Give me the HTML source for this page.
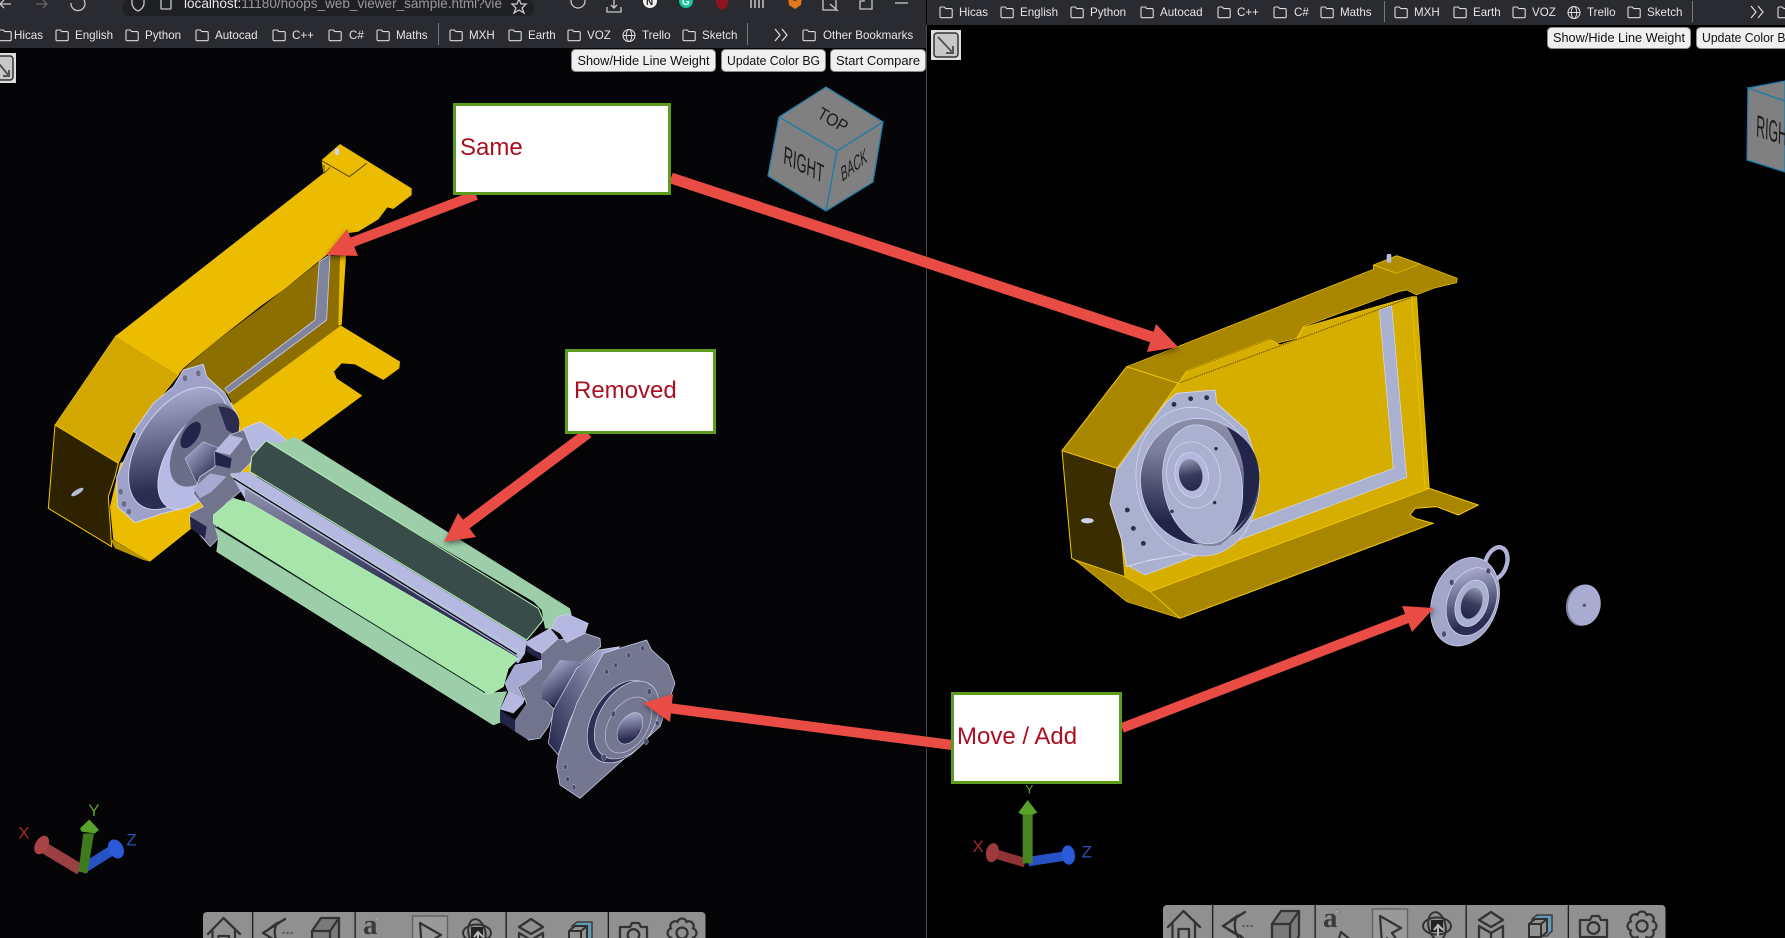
<!DOCTYPE html>
<html lang="en"><head><meta charset="utf-8"><title>Compare</title>
<style>
html,body{margin:0;padding:0;background:#000;width:1785px;height:938px;overflow:hidden}
svg{display:block;font-family:"Liberation Sans",sans-serif}
.bm{font-size:11.6px;fill:#e6e6e6}
.btn{fill:#efeff1;stroke:#8a8a8a;stroke-width:1}
.bt{font-size:12.6px;fill:#111}
.co{font-size:24px;fill:#aa1022}
.ar{filter:drop-shadow(1px 2px 3px rgba(0,0,0,.55))}
</style></head><body>
<svg width="1785" height="938" viewBox="0 0 1785 938" xmlns="http://www.w3.org/2000/svg">
<defs>
<linearGradient id="g" x1="0" y1="1" x2="1" y2="0"><stop offset="0" stop-color="#23244a"/><stop offset=".55" stop-color="#6d7090"/><stop offset="1" stop-color="#b9bce4"/></linearGradient>
<linearGradient id="g2" x1="0" y1="0" x2="1" y2="1"><stop offset="0" stop-color="#b9bce4"/><stop offset=".6" stop-color="#4b4d70"/><stop offset="1" stop-color="#23244a"/></linearGradient>
<linearGradient id="g3" x1="0" y1="0" x2="0" y2="1"><stop offset="0" stop-color="#8f93ad"/><stop offset=".5" stop-color="#3a3c5e"/><stop offset="1" stop-color="#23244a"/></linearGradient>
<linearGradient id="g4" x1=".55" y1="0" x2=".3" y2=".8"><stop offset="0" stop-color="#8a8ea8"/><stop offset=".35" stop-color="#7b7f9c"/><stop offset="1" stop-color="#23244a"/></linearGradient>
<linearGradient id="sh" x1="0" y1="0" x2=".45" y2=".9"><stop offset="0" stop-color="#c0c3ea"/><stop offset=".55" stop-color="#6e7192"/><stop offset="1" stop-color="#2c2d52"/></linearGradient>
<g id="f"><path d="M1 10.500V2.200Q1 1 2.200 1H5.300L6.800 2.600H12Q13.200 2.600 13.200 3.800V10.500Q13.200 11.700 12 11.700H2.200Q1 11.700 1 10.500Z" fill="none" stroke="#dcdcdc" stroke-width="1.100"/></g>
<g id="gl"><circle cx="7" cy="6.500" r="6" fill="none" stroke="#dcdcdc" stroke-width="1.100"/><ellipse cx="7" cy="6.500" rx="2.700" ry="6" fill="none" stroke="#dcdcdc" stroke-width="1"/><path d="M1 6.500H13" stroke="#dcdcdc" stroke-width="1"/></g>
<g id="tb">
<rect x="0" y="0" width="502.500" height="60" rx="4" fill="#909090"/>
<g fill="#1c1c1c"><rect x="49" y="0" width="1.300" height="60"/><rect x="151.500" y="0" width="1.300" height="60"/><rect x="302.500" y="0" width="1.300" height="60"/><rect x="404.700" y="0" width="1.300" height="60"/></g>
<path d="M174 4.500l3.500 3.500h-7zM223 2.500l4 4h-8z" fill="#aaa" stroke="#777" stroke-width=".6"/>
<rect x="209.500" y="4" width="35" height="50" fill="#999" stroke="#626262" stroke-width="1.400"/>
<g fill="none" stroke="#333" stroke-width="2.300" stroke-linejoin="round" stroke-linecap="round">
<path d="M5 22L20.500 6L37 22M9.500 18V42M32 18V42M15.500 42V24H26V42"/>
<path d="M82 7L60 21L80 33M66 17Q72 12 77 10M66 25Q72 29 78 31M74 11Q69 21 75 32"/>
<path d="M80 21h1M84 21h1M88 21h1" stroke-width="1.300"/>
<path d="M109 19L118 6H136V31L127 46H109Z" fill="#7a7a7a"/><path d="M109 19H127L136 6M127 19V46" fill="none"/>
<path d="M178 27L172 47M178 27L194 40L186 46" stroke-width="2.200"/>
<path d="M217 11L238 23L229 28L236 38L231 42L224 33L219 39Z" stroke-width="2.200"/>
<ellipse cx="274" cy="21" rx="14" ry="8.500" stroke-width="2"/><ellipse cx="274" cy="21" rx="8.500" ry="14" stroke-width="2" transform="rotate(-12 274 21)"/>
<path d="M328 7L340 15L328 22L316 15Z"/><path d="M316 21L328 28L340 21M316 21V37L326 43M340 21V37L330 43M328 28V46"/>
<path d="M427 15l2-4h7l2 4h6V32H417V15Z"/><circle cx="430.500" cy="23" r="5.800"/>
</g>
<path d="M369 14L374 10H389V26L384 31H369Z" fill="#5c9db5" stroke="#3c3c3c" stroke-width="1.500"/>
<path d="M366 19L372 14H384V27L378 32H366Z" fill="#919191" stroke="#303030" stroke-width="2"/><path d="M366 19H378V32M378 19L384 14" fill="none" stroke="#303030" stroke-width="2"/>
<rect x="268" y="15" width="12" height="12" fill="#222"/>
<path d="M275 31V21M271 25L275 20L280 25" fill="none" stroke="#bbb" stroke-width="2"/>
<text x="160" y="22" font-family="Liberation Serif,serif" font-weight="bold" font-size="29" fill="#3a3a3a">a</text>
<path transform="translate(479 21)" fill="none" stroke="#333" stroke-width="2.300" d="M11.090 -4.590A4.800 4.800 0 0 1 11.090 4.590A4.800 4.800 0 0 1 4.590 11.090A4.800 4.800 0 0 1 -4.590 11.090A4.800 4.800 0 0 1 -11.090 4.590A4.800 4.800 0 0 1 -11.090 -4.590A4.800 4.800 0 0 1 -4.590 -11.090A4.800 4.800 0 0 1 4.590 -11.090A4.800 4.800 0 0 1 11.090 -4.590ZM5.500 0A5.500 5.500 0 1 1 -5.500 0A5.500 5.500 0 1 1 5.500 0Z"/>
</g>
</defs>

<!-- backgrounds -->
<rect x="0" y="0" width="926" height="938" fill="#050406"/>
<rect x="927" y="0" width="858" height="938" fill="#000"/>
<rect x="926" y="25" width="1" height="913" fill="#4a4a4e"/>

<!-- LEFT MODEL yellow -->
<g transform="translate(30 130) scale(.33333)" stroke-linejoin="round">
<polygon points="600,820 930,585 1110,695 1108,715 1060,750 975,703 935,700 912,725 920,745 997,797 810,935 360,1295 250,1230 240,1130 270,1000" fill="#ecbc00"/>
<polygon points="460,718 550,640 690,535 760,480 890,378 948,375 935,585 610,825 590,790" fill="#8c6f00"/>
<polygon points="935,585 948,375 930,380 925,585" fill="#ecbc00"/>
<polygon points="868,395 900,375 890,570 595,790 585,775 855,570" fill="#7f849c" stroke="#c8cce8" stroke-width="2.500"/>
<polygon points="258,617 880,130 875,90 930,42 1145,175 1145,195 1090,237 1072,232 1045,268 985,305 950,310 890,375 760,480 690,530 550,640 460,715 445,735" fill="#ecbc00"/>
<polygon points="258,617 445,735 310,905 265,1000 75,885" fill="#d2a800" stroke="#f4c800" stroke-width="2"/>
<polygon points="75,885 265,1000 255,1040 235,1100 245,1250 55,1135" fill="#2e2200" stroke="#f4c800" stroke-width="3"/>
<polygon points="240,1225 360,1295 340,1290 255,1255" fill="#b89300"/>
<ellipse cx="142" cy="1086" rx="21" ry="7" fill="#b9bcd8" transform="rotate(-32 142 1086)"/>
<path d="M875 92L958 140L1010 100M882 105V130L900 112" fill="none" stroke="#5a4700" stroke-width="3"/>
<rect x="915" y="55" width="12" height="20" rx="4" fill="#cfd2ee"/>
<!-- motor -->
<polygon points="460,720 520,703 530,740 585,790 625,860 628,920 480,1130 400,1150 315,1178 262,1130 260,1040 320,910 310,905 370,820 430,770" fill="#9fa2c8" stroke="#d8dbf5" stroke-width="2.500"/>
<ellipse cx="445" cy="955" rx="118" ry="205" transform="rotate(33 445 955)" fill="url(#sh)" stroke="#d8dbf5" stroke-width="2.500"/>
<ellipse cx="505" cy="985" rx="92" ry="172" transform="rotate(33 505 985)" fill="#b7bae2" stroke="#d8dbf5" stroke-width="2.500"/>
<ellipse cx="520" cy="945" rx="78" ry="140" transform="rotate(33 520 945)" fill="#6b6e88"/>
<path d="M565 830Q625 830 628 880L625 920L590 900Z" fill="#2b2c50"/>
<ellipse cx="482" cy="915" rx="22" ry="45" transform="rotate(33 482 915)" fill="#23244a"/>
<polygon points="465,985 520,935 590,965 550,1040 500,1060" fill="url(#g2)" stroke="#d8dbf5" stroke-width="1.500"/>
<g fill="#6b6e88" stroke="#d8dbf5"><ellipse cx="505" cy="730" rx="8" ry="10"/><ellipse cx="465" cy="745" rx="8" ry="10"/><ellipse cx="272" cy="1085" rx="8" ry="10"/><ellipse cx="282" cy="1122" rx="8" ry="10"/><ellipse cx="297" cy="1145" rx="8" ry="10"/></g>
<!-- left gear -->
<polygon points="640,900 770,930 690,945 660,1000 620,1040 660,1060 600,1110 550,1160 570,1220 540,1250 480,1180 480,1150 520,1130 490,1090 510,1040 555,1010 555,965 600,915" fill="#71748c" stroke="#d8dbf5" stroke-width="2"/>
<polygon points="640,895 690,875 740,905 770,930 720,960 665,960" fill="#b5b8e0" stroke="#d8dbf5" stroke-width="2"/>
<polygon points="555,965 600,915 640,925 600,975" fill="#b5b8e0"/>
<polygon points="555,965 605,985 600,1015 556,1005" fill="#23244a"/>
<polygon points="490,1075 540,1030 590,1040 545,1085 510,1105" fill="#a6a9d2"/>
<polygon points="480,1160 530,1190 525,1225 482,1195" fill="#23244a"/>
</g>

<!-- LEFT green cylinder & right gear -->
<g transform="translate(180 420) scale(.33333)" stroke-linejoin="round">
<polygon points="300,70 345,50 1170,565 1175,585 1125,628 1095,625 1085,570 1060,545 245,65" fill="#9bcea9"/>
<polygon points="115,355 110,395 940,915 965,905 960,865 980,815 920,820 105,320" fill="#9bcea9" stroke="#b8f5b8" stroke-width="1.500"/>
<polygon points="150,160 205,155 1040,662 1035,700 1015,730 200,245" fill="#b5b8e0"/>
<polygon points="195,205 1015,712 1005,732 195,245" fill="url(#g3)"/>
<path d="M160 175L1010 703" stroke="#0c0c12" stroke-width="4"/>
<path d="M150 165L1030 705" stroke="#b8f5b8" stroke-width="1.500"/>
<polygon points="258,62 1075,565 1090,600 1040,660 210,155 215,110" fill="#394c49" stroke="#b8f5b8" stroke-width="3"/>
<polygon points="160,235 210,250 1015,715 985,745 970,800 935,820 915,820 100,310 100,285" fill="#a8e5aa" stroke="#b8f5b8" stroke-width="2"/>
<path d="M105 320L915 818" stroke="#10251a" stroke-width="3"/>
<!-- gear -->
<polygon points="1090,640 1140,660 1215,640 1260,655 1262,680 1190,740 1130,770 1085,830 1125,870 1105,920 1080,955 1045,960 1015,930 1035,890 1040,850 1015,790 1085,740 1085,700 1130,660" fill="#71748c" stroke="#d8dbf5" stroke-width="2"/>
<polygon points="1115,625 1130,590 1165,583 1225,610 1215,640 1160,668 1140,640" fill="#b5b8e0" stroke="#d8dbf5" stroke-width="1.500"/>
<polygon points="1040,665 1110,625 1135,655 1085,700 1040,680" fill="#b5b8e0" stroke="#d8dbf5" stroke-width="1.500"/>
<polygon points="1040,675 1085,705 1085,722 1040,695" fill="#23244a"/>
<polygon points="975,790 1005,735 1085,720 1085,745 1035,790 1015,800 1030,835 985,815" fill="#a6a9d2" stroke="#d8dbf5" stroke-width="1.500"/>
<polygon points="985,815 1035,835 1030,850 1000,880 960,868" fill="#b5b8e0"/>
<polygon points="960,870 1005,900 1005,935 960,905" fill="#23244a"/>
<polygon points="1005,900 1040,850 1045,960 1005,935" fill="#71748c"/>
<polygon points="1085,795 1140,720 1200,725 1180,800 1125,860 1085,835" fill="url(#sh)"/>
<polygon points="1105,970 1120,870 1190,745 1255,690 1320,680 1260,720 1170,900 1135,1005" fill="url(#g)" stroke="#d8dbf5" stroke-width="2"/>
<polygon points="1135,1005 1190,850 1270,700 1400,660 1415,690 1465,735 1485,790 1440,920 1200,1135 1140,1095 1130,1040" fill="#74778f" stroke="#d8dbf5" stroke-width="2"/>
<ellipse cx="1325" cy="905" rx="88" ry="135" transform="rotate(32 1325 905)" fill="#2f3054" stroke="#d8dbf5" stroke-width="2"/>
<ellipse cx="1340" cy="900" rx="82" ry="128" transform="rotate(32 1340 900)" fill="#74778f" stroke="#d8dbf5" stroke-width="2"/>
<ellipse cx="1345" cy="915" rx="58" ry="92" transform="rotate(32 1345 915)" fill="#74778f" stroke="#d8dbf5" stroke-width="1.500"/>
<ellipse cx="1350" cy="925" rx="32" ry="52" transform="rotate(32 1350 925)" fill="url(#sh)" stroke="#d8dbf5" stroke-width="1.500"/>
<circle cx="1375" cy="935" r="4" fill="#3a3c5e"/>
<g fill="#4a4d68" stroke="#d8dbf5"><ellipse cx="1388" cy="685" rx="6" ry="8"/><ellipse cx="1346" cy="706" rx="6" ry="8"/><ellipse cx="1307" cy="736" rx="6" ry="8"/><ellipse cx="1280" cy="755" rx="6" ry="8"/><ellipse cx="1156" cy="1041" rx="6" ry="8"/><ellipse cx="1163" cy="1078" rx="6" ry="8"/><ellipse cx="1182" cy="1102" rx="6" ry="8"/><ellipse cx="1408" cy="815" rx="7" ry="9"/><ellipse cx="1300" cy="882" rx="7" ry="9"/><ellipse cx="1272" cy="1012" rx="7" ry="9"/><ellipse cx="1398" cy="965" rx="7" ry="9"/><ellipse cx="1432" cy="910" rx="6" ry="8"/></g>
</g>

<!-- RIGHT MODEL -->
<g transform="translate(1050 240) scale(.33333)" stroke-linejoin="round">
<polygon points="230,380 970,88 970,75 1040,47 1110,72 1222,115 1220,128 1150,145 1100,165 1070,150 1045,155 760,260 740,295 680,310 660,297 410,392 385,430" fill="#a88600" stroke="#f4c800" stroke-width="2"/>
<polygon points="385,430 410,395 660,300 690,315 740,298 760,262 1085,170 1138,745 300,1060 225,1010 220,960 200,700" fill="#d6ae00" stroke="#f4c800" stroke-width="2"/>
<polygon points="1085,170 1100,170 1138,745 1125,745" fill="#d6ae00" stroke="#f4c800" stroke-width="2"/>
<polygon points="300,1055 1138,745 1285,795 1225,825 1160,800 1095,805 1080,825 1095,835 1150,850 390,1135" fill="#a88600" stroke="#f4c800" stroke-width="3"/>
<polygon points="230,380 385,430 200,685 36,632" fill="#a88600" stroke="#f4c800" stroke-width="3"/>
<polygon points="36,632 200,685 205,745 180,790 215,900 225,1010 75,960 65,955" fill="#3a2d00" stroke="#f4c800" stroke-width="3"/>
<polygon points="75,960 225,1010 300,1055 390,1135 230,1085" fill="#aa8800" stroke="#f4c800" stroke-width="2"/>
<polygon points="988,210 1025,198 1070,712 285,1005 230,975 520,920 590,848 1030,685" fill="#aab0d0" stroke="#d8dbf5" stroke-width="2"/>
<polygon points="970,75 1040,47 1110,72 1040,100" fill="#b08d00" stroke="#f4c800" stroke-width="2"/>
<rect x="1010" y="42" width="14" height="26" rx="4" fill="#b9bddc"/>
<ellipse cx="112" cy="842" rx="19" ry="8" fill="#cfd2ea"/>
<path d="M390 428L1085 172" stroke="#5c4a00" stroke-width="3" stroke-dasharray="4 3" fill="none"/>
<!-- motor -->
<polygon points="200,690 345,490 380,460 495,450 500,490 590,570 628,690 600,830 510,925 300,960 230,980 215,900 180,790" fill="#aab0d0" stroke="#d8dbf5" stroke-width="2.500"/>
<ellipse cx="440" cy="725" rx="180" ry="225" transform="rotate(-12 440 725)" fill="#aab0d0" stroke="#d8dbf5" stroke-width="2"/>
<ellipse cx="450" cy="725" rx="178" ry="190" transform="rotate(-12 450 725)" fill="url(#g4)" stroke="#d8dbf5" stroke-width="2"/>
<path d="M530 560Q630 610 628 720Q620 830 520 890Q610 760 570 640Q550 590 530 560Z" fill="#23244a"/>
<path d="M420 900Q520 925 590 830Q560 880 510 915Q460 925 420 900Z" fill="#7f849c"/>
<ellipse cx="458" cy="733" rx="118" ry="180" transform="rotate(-10 458 733)" fill="#aab0d0" stroke="#d8dbf5" stroke-width="2"/>
<ellipse cx="430" cy="705" rx="80" ry="100" transform="rotate(-10 430 705)" fill="#aab0d0" stroke="#d8dbf5" stroke-width="2"/>
<ellipse cx="425" cy="705" rx="50" ry="68" transform="rotate(-10 425 705)" fill="#b5b8dc" stroke="#d8dbf5" stroke-width="2"/>
<ellipse cx="422" cy="705" rx="35" ry="48" transform="rotate(-10 422 705)" fill="url(#g3)"/>
<g fill="#2d2e48" stroke="#d8dbf5"><circle cx="372" cy="493" r="8"/><circle cx="422" cy="476" r="8"/><circle cx="470" cy="473" r="8"/><circle cx="232" cy="810" r="8"/><circle cx="250" cy="865" r="8"/><circle cx="280" cy="910" r="8"/><circle cx="498" cy="626" r="6"/><circle cx="494" cy="788" r="6"/><circle cx="366" cy="814" r="6"/></g>
</g>

<!-- right small parts -->
<g transform="translate(1410 530) scale(.33333)">
<ellipse cx="258" cy="100" rx="32" ry="50" transform="rotate(20 258 100)" fill="none" stroke="#aeb2d4" stroke-width="13"/>
<ellipse cx="165" cy="215" rx="98" ry="137" transform="rotate(20 165 215)" fill="#a2a6c8" stroke="#d8dbf5" stroke-width="2"/>
<ellipse cx="185" cy="215" rx="72" ry="105" transform="rotate(20 185 215)" fill="url(#sh)" stroke="#d8dbf5" stroke-width="2"/>
<ellipse cx="185" cy="220" rx="47" ry="72" transform="rotate(20 185 220)" fill="#aab0d0" stroke="#d8dbf5" stroke-width="2"/>
<ellipse cx="185" cy="220" rx="30" ry="48" transform="rotate(20 185 220)" fill="url(#g3)"/>
<g fill="#4a4d68" stroke="#d8dbf5"><ellipse cx="125" cy="157" rx="7" ry="9"/><ellipse cx="235" cy="123" rx="7" ry="9"/><ellipse cx="102" cy="312" rx="7" ry="9"/></g>
<ellipse cx="516" cy="226" rx="48" ry="62" transform="rotate(10 516 226)" fill="#7b7f9c"/>
<ellipse cx="523" cy="225" rx="49" ry="62" transform="rotate(10 523 225)" fill="#a8acd0"/>
<circle cx="523" cy="226" r="5" fill="#55587a"/>
</g>

<!-- cube left -->
<g stroke="#1d7da8" stroke-width="1.300" stroke-linejoin="round" fill="#808080">
<polygon points="826,87 883,122 837,151 779,117"/>
<polygon points="779,117 837,151 826,211 768,176"/>
<polygon points="883,122 873,182 826,211 837,151"/>
</g>
<g fill="#1c1c1c">
<text transform="matrix(.72 .42 -.45 .8 816 117)" font-size="19">TOP</text>
<text transform="matrix(.72 .36 -.1 1.4 783 163)" font-size="18">RIGHT</text>
<text transform="matrix(.55 -.44 .15 1.2 842 182)" font-size="17">BACK</text>
</g>
<!-- cube right -->
<g stroke="#1d7da8" stroke-width="1.300" fill="#808080">
<polygon points="1748,88 1785,101 1785,172 1747,160"/>
<polygon points="1748,88 1785,81 1785,101"/>
</g>
<text transform="matrix(.68 .22 -.05 1.7 1756 136)" font-size="18" fill="#1c1c1c">RIGHT</text>

<!-- gnomon left -->
<g transform="translate(0 780) scale(.33333)">
<path d="M240 268L135 205" stroke="#9a3f42" stroke-width="34"/><ellipse cx="125" cy="195" rx="19" ry="30" transform="rotate(30 125 195)" fill="#a84448"/>
<path d="M245 268L335 212" stroke="#2752c4" stroke-width="30"/><ellipse cx="348" cy="207" rx="22" ry="30" transform="rotate(-28 348 207)" fill="#2b5ad8"/>
<polygon points="250,160 282,160 262,280 235,275" fill="#3f7a1e"/>
<polygon points="268,118 297,150 285,160 245,155 240,145" fill="#58a22c"/>
<text x="55" y="176" font-size="50" fill="#a52b30">X</text>
<text x="265" y="108" font-size="50" fill="#62a02e">Y</text>
<text x="379" y="196" font-size="50" fill="#2a55b8">Z</text>
</g>
<!-- gnomon right -->
<g transform="translate(950 680) scale(.33333)">
<path d="M225 548L130 520" stroke="#8f3337" stroke-width="28"/><ellipse cx="127" cy="518" rx="19" ry="29" transform="rotate(12 127 518)" fill="#9c3a3e"/>
<path d="M235 545L345 528" stroke="#2752c4" stroke-width="28"/><ellipse cx="355" cy="525" rx="20" ry="29" transform="rotate(-8 355 525)" fill="#2b5ad8"/>
<rect x="218" y="400" width="30" height="150" fill="#468522"/>
<polygon points="233,360 262,398 248,404 216,404 205,398" fill="#58a22c"/>
<text x="68" y="516" font-size="50" fill="#a52b30">X</text>
<text x="226" y="340" font-size="36" fill="#62a02e">Y</text>
<text x="395" y="532" font-size="50" fill="#2a55b8">Z</text>
</g>

<!-- toolbars -->
<use href="#tb" x="203" y="912"/>
<use href="#tb" x="1163" y="905"/>

<!-- left chrome -->
<rect x="0" y="0" width="926" height="48" fill="#2a2b30"/>
<rect x="123" y="0" width="411" height="16" rx="5" fill="#1f2024"/>
<text x="184" y="8" font-size="13.500" fill="#e8e8e8" textLength="318" lengthAdjust="spacingAndGlyphs">localhost:<tspan fill="#9a9a9a">11180/hoops_web_viewer_sample.html?vie</tspan></text>
<g fill="none" stroke="#c8c8c8" stroke-width="1.300">
<path d="M11 4H1M4 0L0 4L4 8"/>
<path d="M36 4H46M43 0L47 4L43 8" stroke="#666"/>
<path d="M84 0A7 7 0 1 1 71 3"/>
<path d="M132 0V4Q133 9 138 11Q143 9 144 4V0"/>
<rect x="161" y="-3" width="10" height="12" rx="1"/>
<path d="M519 -1L521 4L526 4L522 8L524 13L519 10L514 13L516 8L512 4L517 4Z"/>
<circle cx="578" cy="1" r="7"/>
<path d="M607 7V12H621V7M614 0V8M611 5L614 8L617 5"/>
<path d="M751 -1V8M755 -1V8M759 -1V8M763 -1V8" stroke-width="1.500"/>
<path d="M823 -2H836V10H823ZM830 4L838 11"/>
<path d="M860 1H864V-2H872V9H860Z"/>
<path d="M895 3H908"/>
</g>
<circle cx="650" cy="1" r="7" fill="#f2f2f2"/><text x="646" y="5" font-size="10" font-weight="bold" fill="#222">N</text>
<circle cx="686" cy="1" r="7" fill="#15c39a"/><text x="682" y="5" font-size="10" font-weight="bold" fill="#fff">G</text>
<path d="M716 -2H728V3Q727 8 722 10Q717 8 716 3Z" fill="#8e1420"/>
<path d="M788 -2L795 1L802 -2L801 5L795 9L789 5Z" fill="#e2761b"/>
<g class="bm">
<use href="#f" x="-2" y="29"/><text x="14" y="39">Hicas</text>
<use href="#f" x="55" y="29"/><text x="75" y="39">English</text>
<use href="#f" x="125" y="29"/><text x="145" y="39">Python</text>
<use href="#f" x="195" y="29"/><text x="215" y="39">Autocad</text>
<use href="#f" x="272" y="29"/><text x="292" y="39">C++</text>
<use href="#f" x="328" y="29"/><text x="349" y="39">C#</text>
<use href="#f" x="376" y="29"/><text x="396" y="39">Maths</text>
<use href="#f" x="449" y="29"/><text x="469" y="39">MXH</text>
<use href="#f" x="508" y="29"/><text x="528" y="39">Earth</text>
<use href="#f" x="567" y="29"/><text x="587" y="39">VOZ</text>
<use href="#gl" x="622" y="29"/><text x="642" y="39">Trello</text>
<use href="#f" x="682" y="29"/><text x="702" y="39">Sketch</text>
<use href="#f" x="802" y="29"/><text x="823" y="39">Other Bookmarks</text>
</g>
<rect x="438" y="23" width="1" height="22" fill="#77787c"/><rect x="747" y="23" width="1" height="22" fill="#77787c"/>
<path d="M775 29L780 35L775 41M782 29L787 35L782 41" fill="none" stroke="#ddd" stroke-width="1.200"/>

<!-- right chrome -->
<rect x="927" y="0" width="858" height="25" fill="#2a2b30"/>
<g class="bm">
<use href="#f" x="939" y="6"/><text x="959" y="16">Hicas</text>
<use href="#f" x="1000" y="6"/><text x="1020" y="16">English</text>
<use href="#f" x="1070" y="6"/><text x="1090" y="16">Python</text>
<use href="#f" x="1140" y="6"/><text x="1160" y="16">Autocad</text>
<use href="#f" x="1217" y="6"/><text x="1237" y="16">C++</text>
<use href="#f" x="1273" y="6"/><text x="1294" y="16">C#</text>
<use href="#f" x="1320" y="6"/><text x="1340" y="16">Maths</text>
<use href="#f" x="1394" y="6"/><text x="1414" y="16">MXH</text>
<use href="#f" x="1453" y="6"/><text x="1473" y="16">Earth</text>
<use href="#f" x="1512" y="6"/><text x="1532" y="16">VOZ</text>
<use href="#gl" x="1567" y="6"/><text x="1587" y="16">Trello</text>
<use href="#f" x="1627" y="6"/><text x="1647" y="16">Sketch</text>
<use href="#f" x="1777" y="6"/>
</g>
<rect x="1384" y="1" width="1" height="21" fill="#77787c"/><rect x="1692" y="1" width="1" height="21" fill="#77787c"/>
<path d="M1751 6L1756 12L1751 18M1758 6L1763 12L1758 18" fill="none" stroke="#ddd" stroke-width="1.200"/>

<!-- buttons -->
<rect class="btn" x="571.500" y="49.500" width="144" height="22" rx="4"/><text class="bt" x="577.500" y="65" textLength="132" lengthAdjust="spacingAndGlyphs">Show/Hide Line Weight</text>
<rect class="btn" x="721.500" y="49.500" width="104" height="22" rx="4"/><text class="bt" x="727" y="65" textLength="93" lengthAdjust="spacingAndGlyphs">Update Color BG</text>
<rect class="btn" x="830.500" y="49.500" width="95" height="22" rx="4"/><text class="bt" x="836" y="65" textLength="84" lengthAdjust="spacingAndGlyphs">Start Compare</text>
<rect class="btn" x="1547.500" y="27.500" width="143" height="21" rx="4"/><text class="bt" x="1553" y="42" textLength="132" lengthAdjust="spacingAndGlyphs">Show/Hide Line Weight</text>
<rect class="btn" x="1696.500" y="27.500" width="104" height="21" rx="4"/><text class="bt" x="1702" y="42" textLength="93" lengthAdjust="spacingAndGlyphs">Update Color BG</text>

<!-- compare icon buttons -->
<g><rect x="-14" y="53" width="30" height="30" fill="#dedede"/><rect x="-11" y="56" width="24" height="24" rx="3" fill="#c8c8c8" stroke="#333" stroke-width="1.500"/><path d="M-4 60L9 76M9 70V76H3" fill="none" stroke="#555" stroke-width="2"/></g>
<g><rect x="931" y="30" width="30" height="30" fill="#dedede"/><rect x="934" y="33" width="24" height="24" rx="3" fill="#c8c8c8" stroke="#333" stroke-width="1.500"/><path d="M938 37L953 53M953 46V53H946" fill="none" stroke="#555" stroke-width="2"/></g>

<!-- arrows -->
<g class="ar" fill="#e94c45" stroke="none">
<path d="M476 195L345 245" stroke="#e94c45" stroke-width="10"/><polygon points="326,255 347,229 358,256"/>
<path d="M671 178L1155 338" stroke="#e94c45" stroke-width="11"/><polygon points="1178,347 1156,324 1147,352"/>
<path d="M588 433L465 525" stroke="#e94c45" stroke-width="11"/><polygon points="444,542 458,513 476,537"/>
<path d="M952 745L668 708" stroke="#e94c45" stroke-width="10"/><polygon points="643,703 673,694 670,722"/>
<path d="M1122 728L1408 618" stroke="#e94c45" stroke-width="10"/><polygon points="1434,608 1402,606 1412,632"/>
</g>

<!-- callouts -->
<g fill="#fff" stroke="#5e9c20" stroke-width="3">
<rect x="454.500" y="104.500" width="215" height="89"/>
<rect x="566.500" y="350.500" width="148" height="82"/>
<rect x="952.500" y="693.500" width="168" height="89"/>
</g>
<text class="co" x="460" y="155">Same</text>
<text class="co" x="574" y="398">Removed</text>
<text class="co" x="957" y="744">Move / Add</text>
</svg>
</body></html>
